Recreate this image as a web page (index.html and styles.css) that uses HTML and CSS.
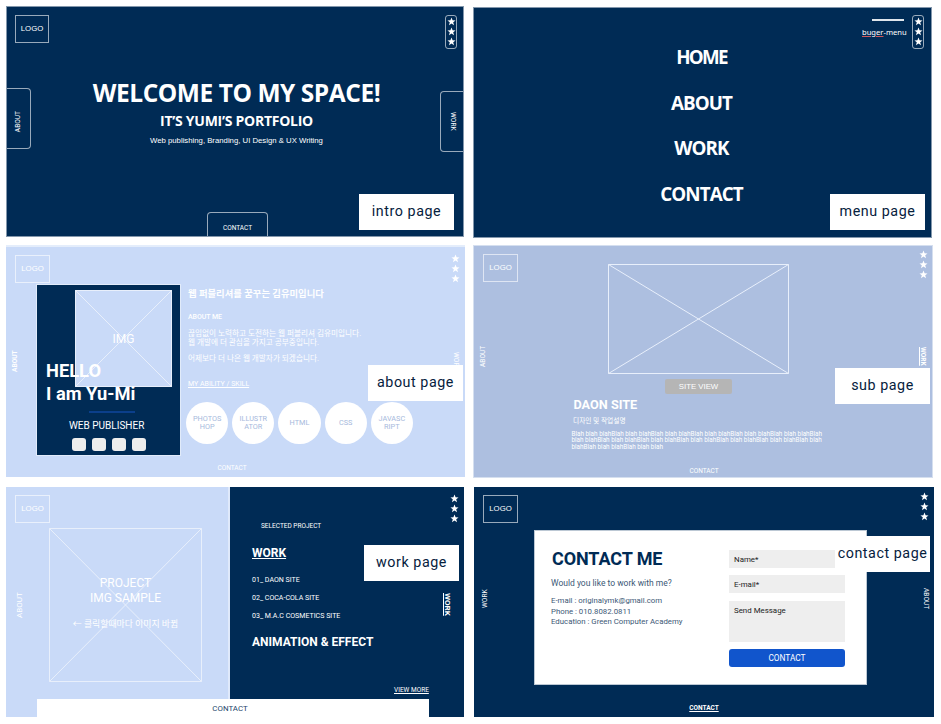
FILE: index.html
```html
<!DOCTYPE html>
<html lang="ko">
<head>
<meta charset="utf-8">
<title>Portfolio wireframes</title>
<link rel="stylesheet" href="styles.css">
</head>
<body>
<svg width="0" height="0" class="defs"><defs><symbol id="star" viewBox="0 0 20 20"><path d="M10 1l2.4 6.3 6.6.3-5.2 4.1 1.8 6.5L10 14.500 4.400 18.200l1.800-6.500L1 7.600l6.600-.3z"/></symbol></defs></svg>
<main class="board">

<section class="slide intro navy">
  <div class="logo">LOGO</div>
  <div class="stars pill"><svg><use href="#star"/></svg><svg><use href="#star"/></svg><svg><use href="#star"/></svg></div>
  <div class="tab tab-left"><span class="up">ABOUT</span></div>
  <div class="tab tab-right"><span class="down">WORK</span></div>
  <div class="tab tab-bottom">CONTACT</div>
  <div class="hero">
    <h1>WELCOME TO MY SPACE!</h1>
    <h2>IT’S YUMI’S PORTFOLIO</h2>
    <p>Web publishing, Branding, UI Design &amp; UX Writing</p>
  </div>
  <div class="label"><span>intro page</span></div>
</section>

<section class="slide menu navy">
  <div class="burger"><i></i><span><u>buger</u>-menu</span></div>
  <div class="stars pill"><svg><use href="#star"/></svg><svg><use href="#star"/></svg><svg><use href="#star"/></svg></div>
  <nav><a class="m1">HOME</a><a>ABOUT</a><a>WORK</a><a>CONTACT</a></nav>
  <div class="label"><span>menu page</span></div>
</section>

<section class="slide about">
  <div class="logo">LOGO</div>
  <div class="stars"><svg><use href="#star"/></svg><svg><use href="#star"/></svg><svg><use href="#star"/></svg></div>
  <span class="side side-l up bold">ABOUT</span>
  <span class="side side-r down">WORK</span>
  <div class="profile">
    <div class="photo"><svg viewBox="0 0 97 97"><path d="M.5.5h96v96H.5zM.5.5l96 96M96.500.5l-96 96"/></svg><span>IMG</span></div>
    <h2>HELLO<br><span>I am Yu-Mi</span></h2>
    <hr>
    <p>WEB PUBLISHER</p>
    <div class="dots"><i></i><i></i><i></i><i></i></div>
  </div>
  <div class="bio">
    <h3>웹 퍼블리셔를 꿈꾸는 김유미입니다</h3>
    <h4>ABOUT ME</h4>
    <p class="k1">끊임없이 노력하고 도전하는 웹 퍼블리셔 김유미입니다.</p>
    <p class="k2">웹 개발에 더 관심을 가지고 공부중입니다.</p>
    <p class="k3">어제보다 더 나은 웹 개발자가 되겠습니다.</p>
    <h5>MY ABILITY / SKILL</h5>
    <div class="skills"><b>PHOTOS<br>HOP</b><b>ILLUSTR<br>ATOR</b><b>HTML</b><b>CSS</b><b>JAVASC<br>RIPT</b></div>
  </div>
  <span class="foot">CONTACT</span>
  <div class="label"><span>about page</span></div>
</section>

<section class="slide sub">
  <div class="logo">LOGO</div>
  <div class="stars"><svg><use href="#star"/></svg><svg><use href="#star"/></svg><svg><use href="#star"/></svg></div>
  <span class="side side-l up">ABOUT</span>
  <span class="side side-r down bold line">WORK</span>
  <svg class="shot" viewBox="0 0 181 110"><path d="M.5.5h180v109H.5zM.5.5l180 109M180.500.5l-180 109"/></svg>
  <div class="view">SITE VIEW</div>
  <h2>DAON SITE</h2>
  <h4>디자인 및 작업설명</h4>
  <p>Blah blah blahBlah blah blahBlah blah blahBlah blah blahBlah blah blahBlah blah blahBlah<br>blah blahBlah blah blahBlah blah blahBlah blah blahBlah blah blahBlah blah blahBlah blah<br>blahBlah blah blahBlah blah blah</p>
  <span class="foot">CONTACT</span>
  <div class="label"><span>sub page</span></div>
</section>

<section class="slide work">
  <div class="logo">LOGO</div>
  <div class="stars"><svg><use href="#star"/></svg><svg><use href="#star"/></svg><svg><use href="#star"/></svg></div>
  <span class="side side-l up">ABOUT</span>
  <span class="side side-r down bold line">WORK</span>
  <div class="left">
    <div class="sample">
      <svg viewBox="0 0 153 154"><path d="M.5.5h152v153H.5zM.5.5l152 153M152.500.5l-152 153"/></svg>
      <h3>PROJECT<br>IMG SAMPLE</h3>
      <p>← 클릭할때마다 이미지 바뀜</p>
    </div>
  </div>
  <div class="right">
    <small>SELECTED PROJECT</small>
    <h2><u>WORK</u></h2>
    <ul><li>01_ DAON SITE</li><li>02_ COCA-COLA SITE</li><li>03_ M.A.C COSMETICS SITE</li></ul>
    <h2 class="anim">ANIMATION &amp; EFFECT</h2>
    <a>VIEW MORE</a>
  </div>
  <div class="bar">CONTACT</div>
  <div class="label"><span>work page</span></div>
</section>

<section class="slide contact navy">
  <div class="logo">LOGO</div>
  <div class="stars"><svg><use href="#star"/></svg><svg><use href="#star"/></svg><svg><use href="#star"/></svg></div>
  <span class="side side-l up">WORK</span>
  <span class="side side-r down">ABOUT</span>
  <div class="card">
    <div class="info">
      <h2>CONTACT ME</h2>
      <h4>Would you like to work with me?</h4>
      <p class="c1">E-mail : originalymk@gmail.com</p>
      <p>Phone : 010.8082.0811</p>
      <p>Education : Green Computer Academy</p>
    </div>
    <div class="form">
      <div class="field">Name*</div>
      <div class="field">E-mail*</div>
      <div class="field area">Send Message</div>
      <div class="send">CONTACT</div>
    </div>
  </div>
  <span class="foot bold line">CONTACT</span>
  <div class="label"><span>contact page</span></div>
</section>

</main>
</body>
</html>
```
FILE: styles.css
```css
* { box-sizing: border-box; margin: 0; padding: 0; }
body { background: #fff; width: 941px; height: 724px; overflow: hidden; color: #fff; font-family: Roboto, "Noto Sans CJK KR", sans-serif; }
.defs { position: absolute; }
.board { display: grid; grid-template-columns: 468px 461px; grid-template-rows: 239px 242px 231px; padding: 6px 0 0 6px; }
.slide { position: relative; overflow: hidden; white-space: nowrap; }
.navy { background: #002b55; }
h1, h2, h3, h4, h5, p { font-weight: 400; }

/* Shared slide furniture */
.logo { position: absolute; left: 9px; top: 8px; width: 35px; height: 28px; border: 1px solid rgba(255,255,255,.6); font: 7.800px/26px "Liberation Sans", sans-serif; text-align: center; }
.stars { position: absolute; display: flex; flex-direction: column; align-items: center; gap: 1px; width: 12px; }
.stars svg { width: 9px; height: 9px; fill: #fff; }
.pill { height: 34px; border: 1px solid rgba(255,255,255,.6); border-radius: 3px; padding-top: 1px; }
.up, .down { writing-mode: vertical-rl; font-size: 6.600px; line-height: 8px; text-underline-position: left; text-underline-offset: -1px; }
.up { transform: rotate(180deg); }
.side { position: absolute; text-align: center; height: 40px; width: 8px; }
.bold { font-weight: 700; }
.line { text-decoration: underline; }
.foot { position: absolute; left: 0; width: 452px; bottom: 4px; text-align: center; font-size: 6.500px; line-height: 10px; }
.label { position: absolute; width: 95px; height: 36px; background: #fff; color: #06213d; font-size: 14.300px; line-height: 34px; letter-spacing: .55px; text-align: center; }

/* Intro */
.intro { width: 458px; height: 231px; border: 1px solid #8397ac; }
.intro .logo { left: 8px; width: 34px; }
.intro .stars { left: 438px; top: 8px; }
.tab { position: absolute; display: flex; align-items: center; justify-content: center; border: 1px solid rgba(255,255,255,.6); font-size: 6.500px; }
.tab-left { left: -1px; top: 81px; width: 25px; height: 61px; border-left: 0; border-radius: 0 4px 4px 0; padding-top: 6px; }
.tab-right { left: 433px; top: 84px; width: 25px; height: 61px; border-right: 0; border-radius: 4px 0 0 4px; }
.tab-bottom { left: 200px; top: 205px; width: 61px; height: 26px; border-bottom: 0; border-radius: 4px 4px 0 0; padding-top: 5px; }
.hero { padding-top: 70px; display: flex; flex-direction: column; align-items: center; font-family: "Open Sans", sans-serif; padding-left: 3px; }
.hero h1 { font-size: 24.500px; line-height: 32px; font-weight: 700; letter-spacing: -.45px; }
.hero h2 { font-size: 14px; line-height: 20px; font-weight: 700; margin-top: 2px; letter-spacing: -.27px; }
.hero p { font: 7.750px/12px "Liberation Sans", sans-serif; margin-top: 4px; }
.intro .label { left: 352px; top: 187px; }

/* Menu */
.menu { width: 459px; height: 231px; margin-left: -1px; margin-top: 1px; border: 1px solid #8397ac; }
.menu .stars { left: 438px; top: 7px; }
.burger { position: absolute; left: 388px; top: 11px; width: 46px; font: 7.600px/10px "Noto Sans", sans-serif; }
.burger i { display: block; width: 32px; height: 2px; background: #dfe5eb; margin: 0 0 6px 10px; }
.burger u { text-decoration: underline #d0565c 1px; text-underline-offset: 1px; }
.menu nav { display: flex; flex-direction: column; align-items: center; padding: 27px 2px 0 0; font: 700 18.800px/45.500px "Open Sans", sans-serif; letter-spacing: -.9px; }
.m1 { letter-spacing: -1.700px; }
.menu .label { left: 356px; top: 186px; }

/* About */
.about { width: 459px; height: 232px; background: #c9daf8; border-top: 2px solid #e4edfb; display: flex; }
.about .stars { left: 443.500px; top: 7px; }
.about .side-l { left: 5px; top: 94px; }
.about .side-r { left: 446px; top: 94px; }
.profile { position: relative; width: 143px; height: 170px; margin: 38px 0 0 31px; background: #002b55; outline: 1px solid #e1ebfa; padding: 75px 0 0 9px; }
.photo { position: absolute; left: 38px; top: 5px; width: 97px; height: 97px; background: #c9daf8; font-size: 12px; line-height: 98px; text-align: center; }
.photo svg { position: absolute; left: 0; top: 0; width: 97px; height: 97px; }
.photo span { position: relative; }
.photo path, .shot path, .sample path { fill: none; stroke: #e8effb; stroke-width: 1; }
.profile h2 { position: relative; font-size: 18.300px; line-height: 22.500px; font-weight: 700; }
.profile hr { border: 0; height: 2px; width: 46px; background: #0b3f8b; margin: 6px 0 0 43px; }
.profile p { font-size: 10px; line-height: 14px; margin: 6px 0 0 23px; }
.dots { display: flex; gap: 6px; margin: 5px 0 0 26px; }
.dots i { width: 14px; height: 13px; border-radius: 3px; background: #eee; }
.bio { padding: 40px 0 0 8px; }
.bio h3 { font-size: 9.350px; line-height: 14px; font-weight: 700; }
.bio h4 { font-size: 7px; line-height: 10px; margin-top: 11px; font-weight: 500; letter-spacing: -.05px; }
.bio p { font-size: 7.650px; line-height: 8.500px; }
.bio .k1 { margin-top: 8px; }
.bio .k3 { margin-top: 8px; }
.bio h5 { font-size: 7px; line-height: 10px; margin-top: 15px; text-decoration: underline; }
.skills { display: flex; gap: 4px; margin: 13px 0 0 -2px; }
.skills b { width: 42.200px; height: 42.200px; border-radius: 50%; background: #fff; color: #a6b9dc; font-size: 7.300px; line-height: 8px; font-weight: 400; display: flex; align-items: center; justify-content: center; text-align: center; }
.about .label { left: 362px; top: 118px; }

/* Sub */
.sub { width: 460px; height: 233px; background: #adbfe0; border: 1px solid #d5dfef; display: flex; flex-direction: column; margin-left: -1px; }
.sub .stars { left: 443px; top: 4px; }
.sub .side-l { left: 5px; top: 90px; }
.sub .side-r { left: 445px; top: 90px; }
.shot { width: 181px; height: 110px; margin: 18px 0 0 134px; flex: none; }
.view { width: 67px; height: 15px; margin: 5px 0 0 191px; background: #b5b5b5; border-radius: 2px; font: 7.800px/15px "Liberation Sans", sans-serif; text-align: center; }
.sub h2 { font-size: 12.700px; line-height: 16px; font-weight: 700; margin: 3px 0 0 99.500px; }
.sub h4 { font-size: 6.700px; line-height: 10px; margin: 3px 0 0 99px; }
.sub p { font-size: 6.350px; line-height: 6.400px; margin: 5px 0 0 97.500px; }
.sub .foot { width: 460px; bottom: 1px; }
.sub .label { left: 361px; top: 122px; }

/* Work */
.work { width: 458px; height: 230px; background: #002b55; display: grid; grid-template-columns: 224px 1fr; }
.left { background: #c9daf8; border-right: 2px solid #dfe9fb; padding: 41px 0 0 43px; }
.sample { position: relative; width: 153px; height: 154px; text-align: center; padding-top: 48px; }
.sample svg { position: absolute; left: 0; top: 0; width: 153px; height: 154px; }
.sample h3 { position: relative; font-size: 12px; line-height: 14.500px; }
.sample p { position: relative; font-size: 8.900px; line-height: 12px; margin-top: 13px; }
.work .stars { left: 442px; top: 7px; }
.work .side { font-size: 8px; }
.work .side-l { left: 10px; top: 98px; font-weight: 400; }
.work .side-r { left: 437px; top: 97px; }
.right { padding: 34px 0 0 22px; }
.right small { display: block; font-size: 6.500px; line-height: 10px; margin-left: 9px; }
.right h2 { font-size: 12px; line-height: 16px; font-weight: 700; margin-top: 14px; }
.right ul { list-style: none; font-size: 7.050px; line-height: 18.200px; margin-top: 10px; }
.right .anim { margin-top: 8px; }
.right a { display: block; font-size: 6.500px; line-height: 8px; text-decoration: underline; margin: 36px 0 0 142px; }
.bar { position: absolute; left: 31px; top: 212px; width: 392px; height: 18px; background: #fff; color: #24456b; font-size: 7.900px; line-height: 19px; text-align: center; padding-right: 6px; }
.work .label { left: 358px; top: 58px; }

/* Contact */
.contact { width: 460px; height: 230px; }
.contact .stars { left: 444.500px; top: 5px; }
.contact .side-l { left: 7px; top: 92px; }
.contact .side-r { left: 448px; top: 92px; }
.card { width: 333px; height: 155px; margin: 43px 0 0 60px; background: #fff; border: 1px solid #bcc8d4; display: flex; color: #3c5876; }
.info { width: 194px; padding: 17px 0 0 16px; }
.info h2 { font-size: 18px; line-height: 22px; font-weight: 700; color: #002b55; margin-left: 1px; letter-spacing: -.1px; }
.info h4 { font-size: 8.500px; line-height: 12px; margin-top: 7px; }
.info p { font-size: 7.800px; line-height: 10.500px; }
.info .c1 { margin-top: 7px; }
.form { width: 116px; padding-top: 19px; font-size: 7.900px; color: #222; }
.field { height: 18px; line-height: 19px; background: #eee; padding-left: 5px; margin-bottom: 7px; }
.field.area { height: 41px; margin-top: 8px; }
.send { height: 18px; line-height: 19px; border-radius: 3px; background: #1155cc; color: #fff; text-align: center; font-size: 8.300px; }
.contact .foot { width: 460px; }
.contact .label { left: 361px; top: 49px; }
```
